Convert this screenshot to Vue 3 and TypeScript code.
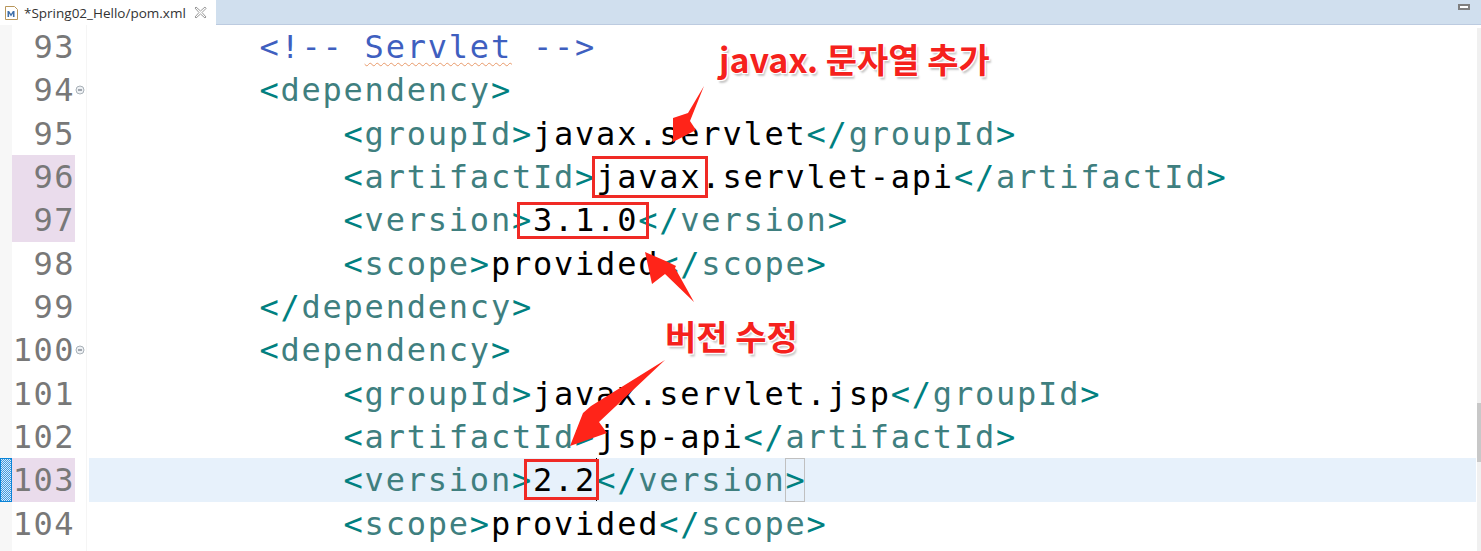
<script setup lang="ts">
type Kind = 'b' | 't' | 'c' | 'x' | 'sq'
interface Seg { k: Kind; s: string }
interface Line { n: number; fold?: boolean; mark?: boolean; current?: boolean; indent: number; segs: Seg[] }

const open = (name: string): Seg[] => [{ k: 'b', s: '<' }, { k: 't', s: name }, { k: 'b', s: '>' }]
const close = (name: string): Seg[] => [{ k: 'b', s: '</' }, { k: 't', s: name }, { k: 'b', s: '>' }]
const el = (name: string, val: string): Seg[] => [...open(name), { k: 'x', s: val }, ...close(name)]

const lines: Line[] = [
  { n: 93, indent: 8, segs: [{ k: 'c', s: '<!-- ' }, { k: 'sq', s: 'Servlet' }, { k: 'c', s: ' -->' }] },
  { n: 94, indent: 8, fold: true, segs: open('dependency') },
  { n: 95, indent: 12, segs: el('groupId', 'javax.servlet') },
  { n: 96, indent: 12, mark: true, segs: el('artifactId', 'javax.servlet-api') },
  { n: 97, indent: 12, mark: true, segs: el('version', '3.1.0') },
  { n: 98, indent: 12, segs: el('scope', 'provided') },
  { n: 99, indent: 8, segs: close('dependency') },
  { n: 100, indent: 8, fold: true, segs: open('dependency') },
  { n: 101, indent: 12, segs: el('groupId', 'javax.servlet.jsp') },
  { n: 102, indent: 12, segs: el('artifactId', 'jsp-api') },
  { n: 103, indent: 12, mark: true, current: true, segs: el('version', '2.2') },
  { n: 104, indent: 12, segs: el('scope', 'provided') },
]
const pad = (n: number): string => ' '.repeat(n)
</script>

<template>
  <div class="page">
    <header class="tabbar">
      <div class="tab">
        <svg class="file-icon" width="15" height="16" viewBox="0 0 15 16">
          <path d="M1.5 1.5h9l3 3v10h-12z" fill="#fff" stroke="#b9975b" />
          <path d="M3.5 12V6h1.6l1.9 3 1.9-3h1.6v6H8.9V8.6L7 11.4 5.1 8.6V12z" fill="#3f6fa8" />
        </svg>
        <span class="tab-title">*Spring02_Hello/pom.xml</span>
        <svg class="tab-close" width="13" height="13" viewBox="0 0 13 13">
          <path d="M2 1l4.5 4L11 1l1 1.500L8 6.500l4 4.500-1 1-4.500-4L2 12l-1-1 4-4.500-4-4.500z" fill="#fff" stroke="#9a9a9a" />
        </svg>
      </div>
      <div class="minimize"></div>
    </header>

    <main class="editor">
      <div class="rows">
        <div v-for="l in lines" :key="l.n" class="row">
          <div class="marker" :class="{ active: l.current }"></div>
          <div class="num" :class="{ mark: l.mark }">{{ l.n }}</div>
          <div class="fold">
            <svg v-if="l.fold" width="10" height="10" viewBox="0 0 10 10">
              <circle cx="5" cy="5" r="4" fill="#eef1f4" stroke="#a9b1b8" />
              <path d="M3 5h4" stroke="#6d7680" stroke-width="1.200" />
            </svg>
          </div>
          <div class="code" :class="{ current: l.current }">
            <pre class="code-text">{{ pad(l.indent) }}<span v-for="(s, i) in l.segs" :key="i" :class="s.k">{{ s.s }}</span></pre>
            <i v-if="l.current" class="match"></i>
            <i v-if="l.current" class="caret"></i>
          </div>
        </div>
        <div class="row">
          <div class="marker"></div>
          <div class="num"></div>
          <div class="fold"></div>
          <div class="code"></div>
        </div>
      </div>
      <div class="scrollbar"><div class="thumb"></div></div>
    </main>

    <div class="box box-a"></div>
    <div class="box box-b"></div>
    <div class="box box-c"></div>

    <svg class="arrows" width="1481" height="551" viewBox="0 0 1481 551">
      <g fill="#ff2419">
        <polygon points="704,86 688,113 673,118 673,142 696,130 690,121" />
        <polygon points="645,252 652,284 665,274 694,302 675,268 676,266 668,262" />
        <polygon points="570,446 607,433 599,422 665,360 591,406 583,413" />
      </g>
    </svg>

    <div class="note note-a">javax. 문자열 추가</div>
    <div class="note note-b">버전 수정</div>
  </div>
</template>

<style>
html, body { margin: 0; background: #fff; }
</style>

<style scoped>
.page {
  position: relative;
  width: 1481px;
  height: 551px;
  overflow: hidden;
  background: #fff;
}
.tabbar {
  display: flex;
  justify-content: space-between;
  align-items: flex-start;
  height: 25px;
  box-sizing: border-box;
  background: #d0dfee;
  border-bottom: 1px solid #bccbe0;
}
.tab {
  display: flex;
  align-items: center;
  width: 216px;
  height: 25px;
  box-sizing: border-box;
  padding-left: 4px;
  background: #fff;
}
.file-icon { flex: none; }
.tab-title {
  margin-left: 5px;
  font: 13.500px "Open Sans", "Noto Sans", sans-serif;
  color: #333;
  white-space: nowrap;
}
.tab-close { flex: none; margin-left: 8px; }
.minimize {
  width: 8px;
  height: 2px;
  margin: 4px 11px 0 0;
  background: #fff;
  border: 2px solid #7f7f7f;
}
.editor {
  display: flex;
  height: 526px;
}
.rows { flex: 1; min-width: 0; }
.row {
  display: flex;
  height: 43.330px;
}
.marker {
  flex: none;
  width: 12px;
  background: #f7f7f7;
}
.marker.active {
  box-sizing: border-box;
  border: 1px solid #0a84d8;
  background: repeating-conic-gradient(#3d9ae0 0 25%, #d8ecfa 0 50%) 0 0 / 2px 2px;
}
.num {
  flex: none;
  width: 63px;
  box-sizing: border-box;
  padding-top: 1px;
  text-align: right;
  font: 32px/42.330px "DejaVu Sans Mono", monospace;
  letter-spacing: 1.500px;
  color: #787878;
}
.num.mark { background: #eadcec; }
.fold {
  flex: none;
  width: 12px;
  display: flex;
  align-items: center;
  box-sizing: border-box;
  border-right: 1px solid #f5f5f5;
}
.code {
  position: relative;
  flex: 1;
  margin: 0 1px 0 2px;
}
.code.current { background: #e7f1fb; }
.code-text {
  margin: 0;
  padding: 1px 0 0 2px;
  font: 32px/42.330px "DejaVu Sans Mono", monospace;
  letter-spacing: 1.780px;
  white-space: pre;
  color: #000;
}
.b { color: #008080; }
.t { color: #3f7f7f; }
.c { color: #3f5fbf; }
.sq {
  color: #3f5fbf;
  text-decoration: underline wavy #e89a6a 1px;
  text-underline-offset: 4px;
}
.x { color: #000; }
.match {
  position: absolute;
  left: 696px;
  top: 0;
  width: 18px;
  height: 42px;
  border: 1px solid #c0c0c0;
}
.caret {
  position: absolute;
  left: 507px;
  top: 0;
  width: 1px;
  height: 43px;
  background: #000;
}
.scrollbar {
  flex: none;
  width: 4px;
  margin-top: 3px;
  background: #f0f0f0;
}
.thumb {
  width: 4px;
  height: 59px;
  margin-top: 375px;
  background: #c8c8c8;
}
.box {
  position: absolute;
  box-sizing: border-box;
  border: 3px solid #f02a25;
}
.box-a { left: 592px; top: 156px; width: 116px; height: 42px; }
.box-b { left: 517px; top: 202px; width: 132px; height: 37px; }
.box-c { left: 524px; top: 459px; width: 75px; height: 41px; }
.arrows {
  position: absolute;
  left: 0;
  top: 0;
}
.note {
  position: absolute;
  font: 700 34px/36px "Noto Sans CJK KR", sans-serif;
  color: #f5211c;
  white-space: nowrap;
  text-shadow: 1px 1px 0 #fff, -1px -1px 0 #fff, 1px -1px 0 #fff, -1px 1px 0 #fff, 2px 3px 2px #c8c8c8;
}
.note-a { left: 719px; top: 41px; }
.note-b { left: 665px; top: 318px; }
</style>
